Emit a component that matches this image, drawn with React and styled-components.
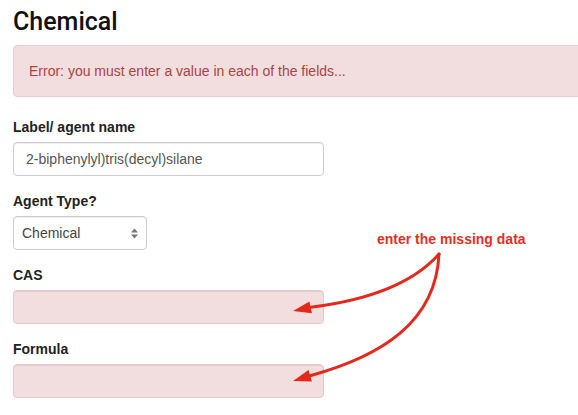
import React from 'react'
import styled, { createGlobalStyle } from 'styled-components'

const GlobalStyle = createGlobalStyle`
  html, body {
    margin: 0;
    padding: 0;
    background: #fff;
  }
  body {
    font-family: "Liberation Sans", Arial, sans-serif;
    font-size: 14px;
    line-height: 20px;
    color: #333;
  }
  * {
    box-sizing: border-box;
  }
`

const Page = styled.div`
  position: relative;
  width: 578px;
  height: 415px;
  overflow: hidden;
`

const Content = styled.div`
  width: 640px;
  padding: 9px 0 0 13px;
`

const Title = styled.h3`
  margin: 0 0 10px;
  font-family: Roboto, "Liberation Sans", sans-serif;
  font-size: 25px;
  line-height: 26px;
  font-weight: 500;
  color: #111;
`

const Alert = styled.div`
  padding: 15px;
  margin-bottom: 20px;
  border: 1px solid #ebccd1;
  border-radius: 4px;
  background: #f2dede;
  color: #a94442;
`

const FormGroup = styled.div`
  margin-bottom: 15px;
`

const Label = styled.label`
  display: block;
  margin-bottom: 5px;
  font-weight: bold;
  color: #222;
`

const Input = styled.input`
  display: block;
  width: ${p => p.$width || 311}px;
  height: 34px;
  padding: 6px 12px;
  font-family: inherit;
  font-size: 14px;
  line-height: 20px;
  color: #555;
  background: ${p => (p.$error ? '#f2dede' : '#fff')};
  border: 1px solid ${p => (p.$error ? '#e9c9cd' : '#ccc')};
  border-radius: 4px;
  box-shadow: inset 0 1px 1px rgba(0, 0, 0, 0.075);
  outline: none;
`

const SelectWrap = styled.div`
  position: relative;
  width: 134px;
`

const Select = styled.select`
  display: block;
  width: 134px;
  height: 34px;
  padding: 6px 12px 6px 8px;
  font-family: inherit;
  font-size: 14px;
  line-height: 20px;
  color: #444;
  background: #fff;
  border: 1px solid #ccc;
  border-radius: 4px;
  box-shadow: inset 0 1px 1px rgba(0, 0, 0, 0.075);
  appearance: none;
  -webkit-appearance: none;
  outline: none;
`

const Caret = styled.svg`
  position: absolute;
  right: 8px;
  top: 12px;
  pointer-events: none;
`

const Callout = styled.div`
  position: absolute;
  left: 377px;
  top: 231px;
  font-size: 14px;
  line-height: 16px;
  font-weight: bold;
  color: #e2301f;
  white-space: nowrap;
`

const Arrows = styled.svg`
  position: absolute;
  left: 0;
  top: 0;
  pointer-events: none;
`

const RED = '#e2291c'

const App = () => {
  return (
    <Page>
      <GlobalStyle />
      <Content>
        <Title>Chemical</Title>
        <Alert>Error: you must enter a value in each of the fields...</Alert>

        <FormGroup>
          <Label>Label/ agent name</Label>
          <Input defaultValue="2-biphenylyl)tris(decyl)silane" />
        </FormGroup>

        <FormGroup>
          <Label>Agent Type?</Label>
          <SelectWrap>
            <Select defaultValue="Chemical">
              <option>Chemical</option>
              <option>Biological</option>
            </Select>
            <Caret width="9" height="11" viewBox="0 0 9 11">
              <path d="M4.5 0.5 L8 4.5 L1 4.5 Z" fill="#777" />
              <path d="M4.5 10.5 L8 6.5 L1 6.5 Z" fill="#777" />
            </Caret>
          </SelectWrap>
        </FormGroup>

        <FormGroup>
          <Label>CAS</Label>
          <Input $error />
        </FormGroup>

        <FormGroup>
          <Label>Formula</Label>
          <Input $error />
        </FormGroup>
      </Content>

      <Callout>enter the missing data</Callout>
      <Arrows width="578" height="415" viewBox="0 0 578 415">
        <path
          d="M439 254 Q402 296 310.6 307.3"
          fill="none"
          stroke={RED}
          strokeWidth="3"
          strokeLinecap="round"
        />
        <polygon points="293,311 309.4,301.4 311.9,313.2" fill={RED} />
        <path
          d="M439 254 C436 322 382 356 310.2 375.8"
          fill="none"
          stroke={RED}
          strokeWidth="3"
          strokeLinecap="round"
        />
        <polygon points="293,381 308.5,370.1 311.9,381.6" fill={RED} />
      </Arrows>
    </Page>
  )
}

export default App
